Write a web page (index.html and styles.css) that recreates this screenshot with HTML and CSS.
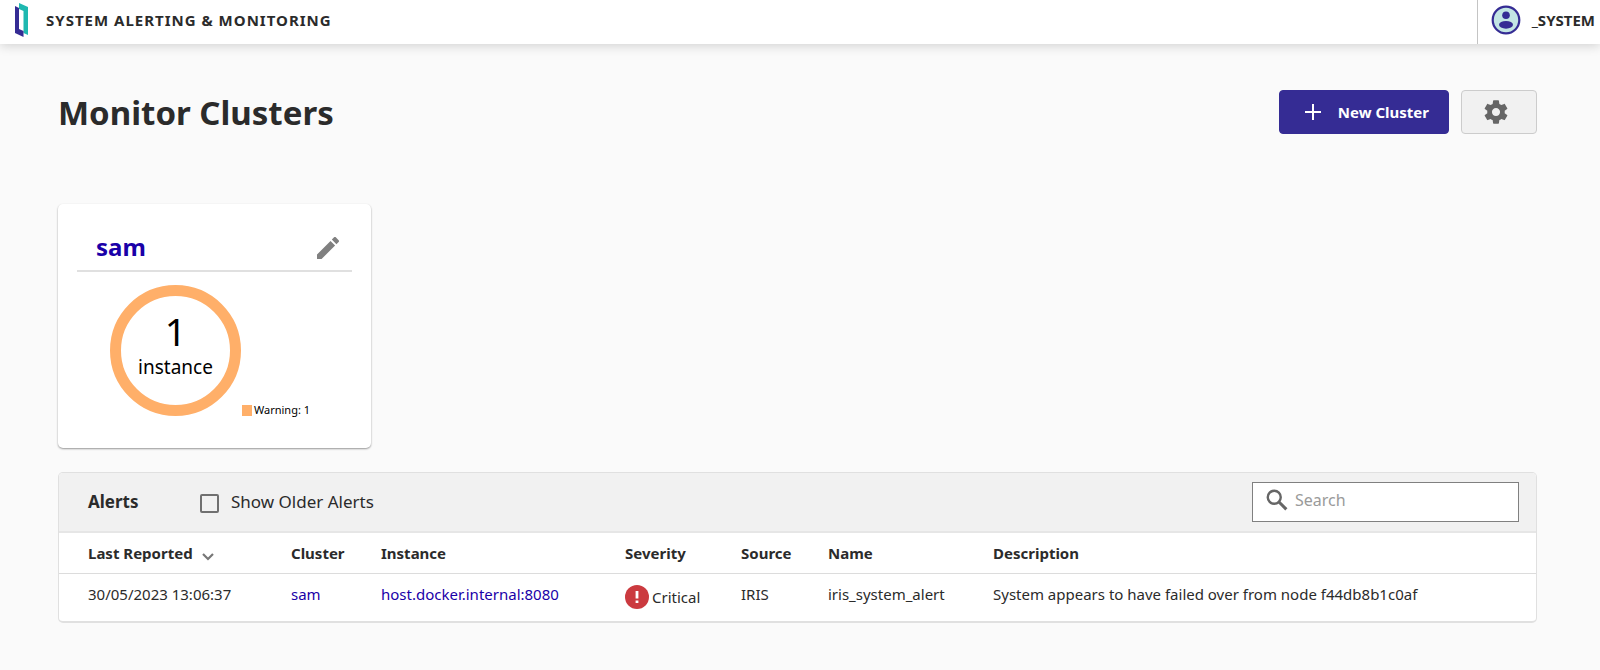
FILE: index.html
```html
<!DOCTYPE html>
<html lang="en">
<head>
    <meta charset="UTF-8">
    <meta name="viewport" content="width=device-width, initial-scale=1.0">
    <title>System Alerting &amp; Monitoring</title>
    <link rel="stylesheet" href="styles.css">
</head>

<body>

<header class="topbar">
    <svg class="logo" viewBox="0 0 13 34" aria-hidden="true">
        <path d="M4 0 L13 4 V32 L8.500 30 V8 L4 6 Z" fill="#1fb8b0"/>
        <path d="M0 3 L4 5 V26 L8.500 28 V34 L0 30 Z" fill="#352c94"/>
    </svg>
    <span class="appName">SYSTEM ALERTING &amp; MONITORING</span>
    <div class="user">
        <svg class="avatar" viewBox="0 0 30 30" aria-hidden="true">
            <circle cx="15" cy="15" r="13.300" fill="#c3e6e4" stroke="#352c94" stroke-width="2.200"/>
            <circle cx="15" cy="10.300" r="3.800" fill="#352c94"/>
            <ellipse cx="15" cy="19.800" rx="7" ry="3.900" fill="#352c94"/>
        </svg>
        <span>_SYSTEM</span>
    </div>
</header>

<main class="main">
    <div class="titleRow">
        <h1>Monitor Clusters</h1>
        <button type="button" class="btn btnPrimary">
            <svg class="plus" viewBox="0 0 18 18" aria-hidden="true">
                <path d="M9 1 V17 M1 9 H17" stroke="#fff" stroke-width="2"/>
            </svg>
            New Cluster
        </button>
        <button type="button" class="btn btnSettings" aria-label="Settings">
            <svg class="gear" viewBox="0 0 24 24" aria-hidden="true">
                <path fill="#666" d="M19.430 12.980c.04-.32.07-.64.07-.98s-.03-.66-.07-.98l2.110-1.650c.19-.15.24-.42.12-.64l-2-3.460c-.12-.22-.39-.3-.61-.22l-2.490 1c-.52-.4-1.080-.73-1.690-.98l-.38-2.650C14.460 2.180 14.250 2 14 2h-4c-.25 0-.46.18-.49.42l-.38 2.650c-.61.25-1.170.59-1.690.98l-2.490-1c-.23-.09-.49 0-.61.22l-2 3.460c-.13.22-.07.49.12.64l2.110 1.650c-.04.32-.07.65-.07.98s.03.66.07.98l-2.110 1.650c-.19.15-.24.42-.12.64l2 3.460c.12.22.39.3.61.22l2.490-1c.52.4 1.080.73 1.690.98l.38 2.650c.03.24.24.42.49.42h4c.25 0 .46-.18.49-.42l.38-2.650c.61-.25 1.170-.59 1.690-.98l2.490 1c.23.09.49 0 .61-.22l2-3.460c.12-.22.07-.49-.12-.64l-2.110-1.650zM12 15.500c-1.930 0-3.500-1.570-3.500-3.500s1.570-3.500 3.500-3.500 3.500 1.570 3.500 3.500-1.570 3.500-3.500 3.500z"/>
            </svg>
        </button>
    </div>

    <section class="card">
        <div class="cardHead">
            <a href="#sam">sam</a>
            <button type="button" class="editBtn" aria-label="Edit cluster">
                <svg viewBox="3 3 18 18" aria-hidden="true">
                    <path fill="#808080" d="M3 17.250V21h3.750L17.810 9.940l-3.750-3.750L3 17.250zM20.710 7.040c.39-.39.39-1.020 0-1.410l-2.340-2.340c-.39-.39-1.020-.39-1.410 0l-1.830 1.830 3.750 3.750 1.830-1.830z"/>
                </svg>
            </button>
        </div>
        <div class="chart">
            <div class="donut">
                <span class="count">1</span>
                <span class="unit">instance</span>
            </div>
            <div class="legend"><i class="swatch"></i>Warning: 1</div>
        </div>
    </section>

    <section class="alerts">
        <div class="alertsBar">
            <h2>Alerts</h2>
            <label class="older"><input type="checkbox"> Show Older Alerts</label>
            <label class="search">
                <svg viewBox="0 0 20 20" aria-hidden="true">
                    <circle cx="7.500" cy="7.500" r="5.900" fill="none" stroke="#666" stroke-width="2.200"/>
                    <path d="M11.800 11.800 L18.500 18.500" stroke="#666" stroke-width="2.800"/>
                </svg>
                <input type="text" placeholder="Search" aria-label="Search">
            </label>
        </div>
        <table>
            <colgroup>
                <col class="colTime"><col class="colCluster"><col class="colInstance">
                <col class="colSeverity"><col class="colSource"><col class="colName"><col>
            </colgroup>
            <thead>
                <tr>
                    <th>Last Reported
                        <svg class="sort" viewBox="0 0 12 8" aria-hidden="true">
                            <path d="M1 1 L6 6 L11 1" fill="none" stroke="#777" stroke-width="2.200"/>
                        </svg>
                    </th>
                    <th>Cluster</th>
                    <th>Instance</th>
                    <th>Severity</th>
                    <th>Source</th>
                    <th>Name</th>
                    <th>Description</th>
                </tr>
            </thead>
            <tbody>
                <tr>
                    <td>30/05/2023 13:06:37</td>
                    <td><a href="#sam">sam</a></td>
                    <td><a href="#instance">host.docker.internal:8080</a></td>
                    <td>
                        <div class="severity">
                            <svg viewBox="0 0 24 24" aria-hidden="true">
                                <circle cx="12" cy="12" r="12" fill="#cb3a3f"/>
                                <path d="M12 6 V13.500 M12 15.500 V18" stroke="#fff" stroke-width="2.800"/>
                            </svg>
                            Critical
                        </div>
                    </td>
                    <td>IRIS</td>
                    <td>iris_system_alert</td>
                    <td>System appears to have failed over from node f44db8b1c0af</td>
                </tr>
            </tbody>
        </table>
    </section>
</main>

</body>
</html>
```
FILE: styles.css
```css
* {
    box-sizing: border-box;
}

body {
    margin: 0;
    background: #fafafa;
    color: #2b2b2b;
    font-family: "Noto Sans", sans-serif;
    font-size: 15px;
    line-height: 24px;
}

a {
    color: #1a00a8;
    text-decoration: none;
}

svg {
    display: block;
    flex: none;
}

/* top bar */
.topbar {
    display: flex;
    align-items: center;
    height: 44px;
    padding-left: 15px;
    background: #fff;
    box-shadow: 0 2px 10px rgba(0, 0, 0, 0.16);
    font-weight: bold;
}

.logo {
    width: 13px;
    height: 34px;
    margin: 0 18px 4px 0;
}

.appName {
    flex: 1;
    letter-spacing: 1px;
    padding-bottom: 4px;
}

.user {
    display: flex;
    align-items: center;
    gap: 11px;
    height: 44px;
    padding: 0 5px 4px 13px;
    border-left: 1px solid #c4c4c4;
}

.avatar {
    width: 30px;
    height: 30px;
}

.main {
    padding: 46px 63px 40px 58px;
}

/* page title and buttons */
.titleRow {
    display: flex;
    align-items: center;
    gap: 12px;
    margin-bottom: 70px;
}

h1 {
    flex: 1;
    margin: 0;
    padding-top: 2px;
    font-size: 33px;
    line-height: 42px;
}

.btn {
    display: flex;
    align-items: center;
    height: 44px;
    border-radius: 4px;
    font: bold 15px/24px "Noto Sans", sans-serif;
    cursor: pointer;
}

.btnPrimary {
    gap: 16px;
    padding: 0 19px 0 24px;
    border: 1px solid #352c94;
    background: #352c94;
    color: #fff;
}

.plus {
    width: 18px;
    height: 18px;
}

.btnSettings {
    width: 76px;
    padding: 0 0 0 20px;
    border: 1px solid #ccc;
    background: #f1f1f1;
}

.gear {
    width: 28px;
    height: 28px;
}

/* cluster card */
.card {
    width: 313px;
    height: 244px;
    margin-bottom: 24px;
    padding: 20px 19px;
    border-radius: 5px;
    background: #fff;
    box-shadow: 0 1px 2px rgba(0, 0, 0, 0.4);
}

.cardHead {
    display: flex;
    align-items: center;
    justify-content: space-between;
    height: 48px;
    padding: 0 13px 0 19px;
    border-bottom: 2px solid #e0e0e0;
    font-size: 24px;
    font-weight: bold;
}

.editBtn {
    padding: 2px 0 0;
    border: 0;
    background: none;
    cursor: pointer;
}

.editBtn svg {
    width: 22px;
    height: 22px;
}

.chart {
    display: flex;
    align-items: flex-end;
    padding: 13px 0 0 33px;
}

.donut {
    display: flex;
    flex-direction: column;
    align-items: center;
    width: 131px;
    height: 131px;
    padding-top: 11px;
    border: 11px solid #ffaf69;
    border-radius: 50%;
    color: #000;
}

.count {
    font-size: 38px;
    line-height: 48px;
}

.unit {
    font-size: 19px;
    line-height: 24px;
}

.legend {
    display: flex;
    align-items: center;
    gap: 2px;
    margin-left: 1px;
    color: #000;
    font-size: 11px;
    line-height: 12px;
}

.swatch {
    width: 10px;
    height: 11px;
    background: #ffaf69;
}

/* alerts */
.alerts {
    border: 1px solid #e0e0e0;
    border-bottom-width: 2px;
    border-radius: 5px;
    background: #fff;
    overflow: hidden;
}

.alertsBar {
    display: flex;
    align-items: center;
    height: 60px;
    padding: 0 17px 0 29px;
    border-bottom: 2px solid #e6e6e6;
    background: #f1f1f1;
    font-size: 17px;
}

h2 {
    width: 112px;
    margin: 0;
    font-size: 17px;
    line-height: 24px;
}

.older {
    display: flex;
    align-items: center;
    flex: 1;
    gap: 12px;
}

.older input {
    appearance: none;
    width: 19px;
    height: 19px;
    margin: 3px 0 0;
    border: 2px solid #707070;
    border-radius: 2px;
}

.search {
    display: flex;
    align-items: center;
    gap: 7px;
    width: 267px;
    height: 40px;
    padding: 0 10px 4px 13px;
    border: 1px solid #808080;
    background: #fff;
}

.search svg {
    width: 22px;
    height: 22px;
}

.search input {
    flex: 1;
    min-width: 0;
    padding: 0;
    border: 0;
    outline: 0;
    background: none;
    font: 16px/24px "Noto Sans", sans-serif;
}

.search input::placeholder {
    color: #9a9a9a;
}

table {
    width: 100%;
    table-layout: fixed;
    border-collapse: collapse;
}

.colTime { width: 232px; }
.colCluster { width: 90px; }
.colInstance { width: 244px; }
.colSeverity { width: 116px; }
.colSource { width: 87px; }
.colName { width: 165px; }

th,
td {
    padding: 0;
    text-align: left;
    white-space: nowrap;
}

th:first-child,
td:first-child {
    padding-left: 29px;
}

th {
    height: 40px;
    border-bottom: 1px solid #dcdcdc;
}

td {
    height: 48px;
    padding-top: 8px;
    vertical-align: top;
}

.sort {
    display: inline-block;
    width: 12px;
    height: 8px;
    margin-left: 5px;
    vertical-align: -2px;
}

.severity {
    display: flex;
    align-items: center;
    gap: 3px;
    padding-top: 3px;
}

.severity svg {
    width: 24px;
    height: 24px;
}
```
